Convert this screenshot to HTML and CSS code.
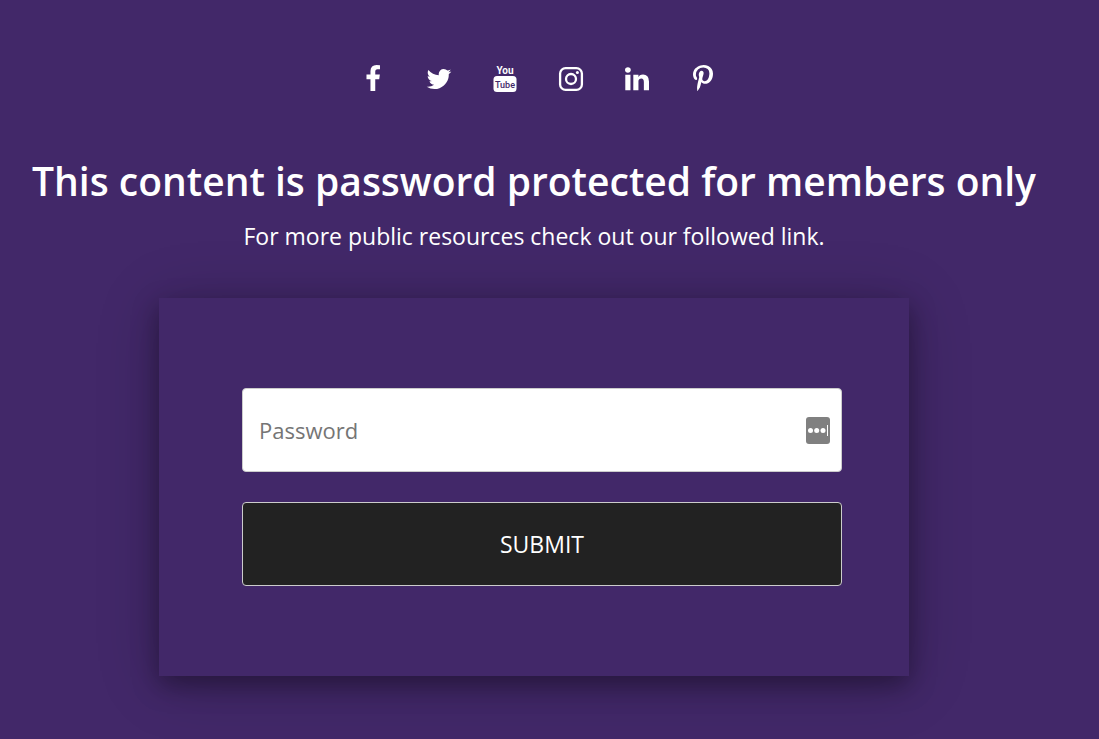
FILE: index.html
```html
<!DOCTYPE html>
<html lang="en">
<head>
<meta charset="utf-8">
<meta name="viewport" content="width=device-width, initial-scale=1">
<title>Password protected</title>
<link rel="stylesheet" href="styles.css">
</head>
<body>
<main class="page">
  <nav class="social" aria-label="Social media">
    <a class="social-link" href="#" aria-label="Facebook"><svg class="icon" viewBox="0 0 1792 1792"><path d="M1343 12v264h-157q-86 0-116 36t-30 108v189h293l-39 296h-254v759h-306v-759h-255v-296h255v-218q0-186 104-288.500t277-102.500q147 0 228 12z"/></svg></a>
    <a class="social-link" href="#" aria-label="Twitter"><svg class="icon" viewBox="0 0 1792 1792"><path d="M1684 408q-67 98-162 167 1 14 1 42 0 130-38 259.500t-115.500 248.500-184.500 210.500-258 146-323 54.500q-271 0-496-145 35 4 78 4 225 0 401-138-105-2-188-64.500t-114-159.500q33 5 61 5 43 0 85-11-112-23-185.500-111.500t-73.500-205.500v-4q68 38 146 41-66-44-105-115t-39-154q0-88 44-163 121 149 294.500 238.500t371.500 99.500q-8-38-8-74 0-134 94.500-228.500t228.500-94.500q140 0 236 102 109-21 205-78-37 115-142 178 93-10 186-50z"/></svg></a>
    <a class="social-link" href="#" aria-label="YouTube"><svg class="icon" viewBox="0 0 28 28"><rect x="2.500" y="11" width="23" height="16" rx="3.500"/><text class="logo-you" x="14" y="9" text-anchor="middle">You</text><text class="logo-tube" x="14" y="23" text-anchor="middle">Tube</text></svg></a>
    <a class="social-link" href="#" aria-label="Instagram"><svg class="icon" viewBox="0 0 28 28"><rect class="line" x="3.100" y="3.100" width="21.800" height="21.800" rx="5.500"/><circle class="line" cx="14" cy="14" r="5"/><circle cx="20.400" cy="7.600" r="1.500"/></svg></a>
    <a class="social-link" href="#" aria-label="LinkedIn"><svg class="icon" viewBox="0 0 1792 1792"><path d="M477 625v991h-330v-991h330zm21-306q1 73-50.500 122t-135.500 49h-2q-82 0-132-49t-50-122q0-74 51.500-122.500t134.500-48.500 133 48.500 51 122.500zm1166 729v568h-329v-530q0-105-40.500-164.500t-126.500-59.500q-63 0-105.500 34.500t-63.500 85.500q-11 30-11 81v553h-329q2-399 2-647t-1-296l-1-48h329v144h-2q20-32 41-56t56.500-52 87-43.500 114.500-15.500q171 0 275 113.500t104 332.500z"/></svg></a>
    <a class="social-link" href="#" aria-label="Pinterest"><svg class="icon" viewBox="0 0 1792 1792"><path d="M256 597q0-108 37.500-203.500t103.500-166.500 152-123 185-78 202-26q158 0 294 66.500t221 193.500 85 287q0 96-19 188t-60 177-100 149.500-145 103-189 38.500q-68 0-135-32t-96-88q-10 39-28 112.500t-23.500 95-20.500 71-26 71-32 62.500-46 77.500-62 86.500l-14 5-9-10q-15-157-15-188 0-92 21.500-206.500t66.500-287.500 52-203q-32-65-32-169 0-83 52-156t132-73q61 0 95 40.500t34 102.500q0 66-44 191t-44 187q0 63 45 104.500t109 41.500q55 0 102-25t78.500-68 56-95 38-110.500 20-111 6.500-99.500q0-173-109.500-269.500t-285.500-96.500q-200 0-334 129.500t-134 328.500q0 44 12.500 85t27 65 27 45.500 12.500 30.500q0 28-15 73t-37 45q-2 0-17-3-51-15-90.500-56t-61-94.500-32.500-108-11-106.500z"/></svg></a>
  </nav>
  <h1 class="title">This content is password protected for members only</h1>
  <p class="subtitle">For more public resources check out our followed link.</p>
  <form class="card">
    <div class="field">
      <input class="control password" type="password" placeholder="Password" aria-label="Password">
      <svg class="key-icon" viewBox="0 0 24 27" aria-hidden="true"><rect width="24" height="27" rx="3" fill="#808080"/><g fill="#fff"><circle cx="4.500" cy="13.500" r="2.500"/><circle cx="10.700" cy="13.500" r="2.500"/><circle cx="17" cy="13.500" r="2.500"/><rect x="21" y="8" width="1" height="11"/></g></svg>
    </div>
    <button class="control submit" type="button">SUBMIT</button>
  </form>
</main>
</body>
</html>
```
FILE: styles.css
```css
* {
  box-sizing: border-box;
}

body {
  margin: 0;
  background: #422869;
  color: #fff;
  font-family: "Open Sans", "Noto Sans", sans-serif;
}

.page {
  display: flex;
  flex-direction: column;
  align-items: center;
  padding: 65px 31px 63px 0;
}

.social {
  display: flex;
  gap: 38px;
  padding-left: 8px;
}

.social-link {
  display: block;
  color: #fff;
}

.icon {
  display: block;
  width: 28px;
  height: 28px;
  fill: currentColor;
}

.line {
  fill: none;
  stroke: currentColor;
  stroke-width: 2.3;
}

.logo-you,
.logo-tube {
  font-family: Roboto, "Liberation Sans", sans-serif;
}

.logo-you {
  font-size: 10px;
  font-weight: 700;
}

.logo-tube {
  font-size: 9px;
  font-weight: 500;
  fill: #422869;
}

.title {
  margin: 60px 0 0;
  font-size: 39px;
  font-weight: 600;
  line-height: 56px;
  text-align: center;
}

.subtitle {
  margin: 9px 0 44px;
  font-size: 23px;
  line-height: 36px;
  text-align: center;
}

.card {
  display: grid;
  gap: 30px;
  width: 100%;
  max-width: 750px;
  padding: 90px 67px 90px 83px;
  background: #422869;
  box-shadow: 0 9px 24px rgba(0, 0, 0, 0.34), 0 6px 60px rgba(0, 0, 0, 0.2);
}

.field {
  position: relative;
}

.control {
  display: block;
  width: 100%;
  height: 84px;
  padding: 0 16px;
  border: 1px solid #ccc;
  border-radius: 4px;
  font-family: inherit;
  font-size: 23px;
}

.password {
  background: #fff;
  color: #222;
}

.password::placeholder {
  color: #757575;
  font-size: 22px;
  opacity: 1;
}

.key-icon {
  position: absolute;
  top: 29px;
  right: 12px;
  width: 24px;
  height: 27px;
}

.submit {
  background: #222;
  color: #fff;
  cursor: pointer;
}
```
